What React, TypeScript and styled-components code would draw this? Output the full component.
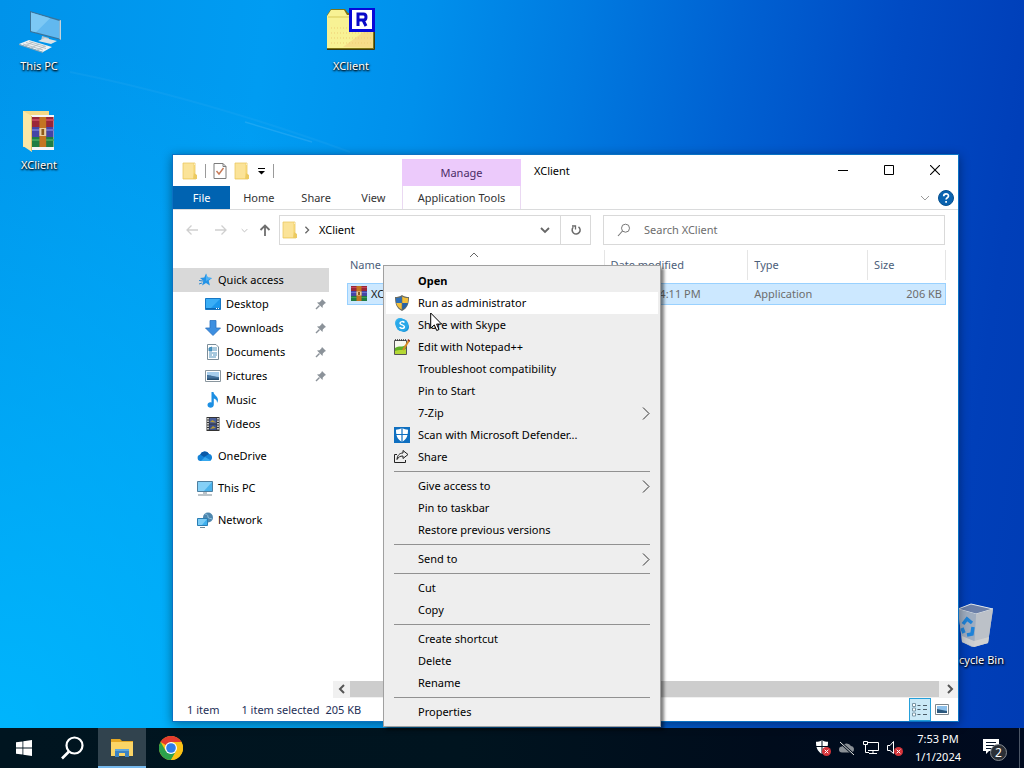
import React from "react";
import styled, { createGlobalStyle, css } from "styled-components";

const GlobalStyle = createGlobalStyle`
  *, *::before, *::after { box-sizing: border-box; }
  html, body { margin: 0; padding: 0; }
  body {
    font-family: "Noto Sans", "Open Sans", sans-serif;
    font-size: 11px;
    line-height: 16px;
    color: #1a1a1a;
  }
  button, input { font: inherit; color: inherit; }
  svg { display: block; flex: none; }
`;

const plainButton = css`
  appearance: none;
  border: 0;
  padding: 0;
  margin: 0;
  background: transparent;
`;

/* ---------- desktop ---------- */

const Screen = styled.div`
  min-height: 100vh;
  display: flex;
  flex-direction: column;
  overflow: hidden;
`;

const Desktop = styled.main`
  position: relative;
  z-index: 1;
  flex: 1;
  background:
    radial-gradient(ellipse 60% 95% at 0% 100%, rgba(0, 186, 255, 0.85), rgba(0, 176, 255, 0) 100%),
    linear-gradient(98deg, #0093ea 0%, #009cf2 24%, #0090ec 38%, #007ae0 52%, #0061d2 66%, #004bc4 80%, #003fb9 92%, #003cb4 100%);
`;

const Streak = styled.svg`
  position: absolute;
  left: 0;
  top: 0;
`;

const Shortcut = styled.button<{ $left: number; $top: number }>`
  ${plainButton}
  position: absolute;
  left: ${(p) => p.$left}px;
  top: ${(p) => p.$top}px;
  width: 76px;
  display: flex;
  flex-direction: column;
  align-items: center;
  gap: 2px;
  color: #fff;
  text-shadow: 0 1px 2px #000, 1px 1px 2px rgba(0, 0, 0, 0.9);
`;

/* ---------- explorer window ---------- */

const Window = styled.section`
  position: absolute;
  left: 172px;
  right: 65px;
  top: 154px;
  bottom: 6px;
  display: flex;
  flex-direction: column;
  background: #fff;
  border: 1px solid #0a72c4;
  box-shadow: 0 2px 10px rgba(0, 0, 0, 0.4);
`;

const Header = styled.header`
  display: flex;
  height: 55px;
  border-bottom: 1px solid #dadbdc;
`;

const HeaderLeft = styled.div`
  display: flex;
  flex-direction: column;
  width: 229px;
`;

const QuickTools = styled.div`
  display: flex;
  align-items: center;
  height: 31px;
  padding-left: 9px;
  gap: 7px;
`;

const ToolDivider = styled.span`
  width: 1px;
  height: 14px;
  background: #9a9a9a;
`;

const IconButton = styled.button`
  ${plainButton}
  display: flex;
  align-items: center;
  justify-content: center;
`;

const Tabs = styled.nav`
  display: flex;
  flex: 1;
`;

const Tab = styled.button<{ $file?: boolean }>`
  ${plainButton}
  flex: 1 1 56px;
  color: ${(p) => (p.$file ? "#fff" : "#333")};
  background: ${(p) => (p.$file ? "#0063b1" : "transparent")};
`;

const ToolGroup = styled.div`
  width: 119px;
  padding-top: 4px;
  display: flex;
  flex-direction: column;
`;

const ToolGroupTitle = styled.div`
  height: 27px;
  line-height: 28px;
  text-align: center;
  color: #4b2c66;
  background: #eccafb;
`;

const ToolGroupTab = styled.button`
  ${plainButton}
  flex: 1;
  color: #333;
  border: solid #ead9f2;
  border-width: 0 1px;
`;

const HeaderRight = styled.div`
  flex: 1;
  display: flex;
  flex-direction: column;
`;

const TitleBar = styled.div`
  display: flex;
  height: 31px;
  padding-left: 13px;
`;

const Title = styled.h1`
  flex: 1;
  margin: 0;
  font-size: 11px;
  font-weight: 400;
  line-height: 32px;
  color: #000;
`;

const CaptionButton = styled(IconButton)`
  width: 46px;
  height: 30px;
`;

const RibbonTools = styled.div`
  flex: 1;
  display: flex;
  align-items: center;
  justify-content: flex-end;
  gap: 8px;
  padding-right: 4px;
`;

const NavBar = styled.div`
  display: grid;
  grid-template-columns: 106px minmax(0, 312fr) minmax(0, 354fr);
  height: 40px;
  padding: 5px 13px 5px 0;
`;

const NavButtons = styled.div`
  display: grid;
  grid-template-columns: 30px 27px 21px 20px;
  padding-left: 4px;
`;

const AddressBar = styled.div`
  display: flex;
  align-items: center;
  border: 1px solid #d9d9d9;
`;

const Crumb = styled.button`
  ${plainButton}
  flex: 1;
  text-align: left;
  color: #000;
`;

const AddressIcons = styled.span`
  display: flex;
  align-items: center;
  gap: 5px;
  padding: 0 8px 0 2px;
`;

const AddressButton = styled(IconButton)<{ $divided?: boolean }>`
  width: 30px;
  height: 28px;
  border-left: ${(p) => (p.$divided ? "1px solid #d9d9d9" : "0")};
`;

const SearchBox = styled.label`
  display: flex;
  align-items: center;
  gap: 13px;
  margin-left: 12px;
  padding-left: 13px;
  border: 1px solid #d9d9d9;
`;

const SearchInput = styled.input`
  flex: 1;
  min-width: 0;
  border: 0;
  padding: 0;
  outline: 0;
  background: transparent;
  &::placeholder { color: #6d6d6d; opacity: 1; }
`;

const Body = styled.div`
  flex: 1;
  min-height: 0;
  display: flex;
`;

const Sidebar = styled.nav`
  width: 160px;
  padding: 18px 4px 0 0;
`;

const Place = styled.button<{ $child?: boolean; $selected?: boolean; $spaced?: boolean }>`
  ${plainButton}
  display: flex;
  align-items: center;
  gap: 5px;
  width: 100%;
  height: 24px;
  margin-top: ${(p) => (p.$spaced ? 8 : 0)}px;
  padding-left: ${(p) => (p.$child ? 32 : 24)}px;
  padding-right: 2px;
  text-align: left;
  color: #000;
  background: ${(p) => (p.$selected ? "#d9d9d9" : "transparent")};
`;

const PlaceName = styled.span`
  flex: 1;
`;

const Pane = styled.div`
  flex: 1;
  min-width: 0;
  display: flex;
  flex-direction: column;
`;

const Listing = styled.div`
  flex: 1;
  padding: 0 12px 0 14px;
`;

const FileTable = styled.table`
  width: 100%;
  table-layout: fixed;
  border-collapse: separate;
  border-spacing: 0;
`;

const Column = styled.th<{ $width: number }>`
  position: relative;
  width: ${(p) => p.$width}%;
  height: 30px;
  padding: 0 0 0 6px;
  font-weight: 400;
  text-align: left;
  color: #4c607a;
  border-right: 1px solid #e5e5e5;
  &:first-child { padding-left: 3px; }
`;

const SortMark = styled.span`
  position: absolute;
  top: 0;
  left: 50%;
  margin-left: -6px;
`;

const SpacerCell = styled.td`
  height: 3px;
  padding: 0;
`;

const FileRow = styled.tr`
  & > td {
    height: 22px;
    padding: 0 0 0 6px;
    color: #6d6d6d;
    background: #cce8ff;
    border: solid #99d1ff;
    border-width: 1px 0;
  }
  & > td:first-child { border-left-width: 1px; padding-left: 3px; color: #1a1a1a; }
  & > td:last-child { border-right-width: 1px; padding-right: 3px; text-align: right; }
`;

const FileName = styled.span`
  display: flex;
  align-items: center;
  gap: 4px;
`;

const ScrollBar = styled.div`
  display: flex;
  height: 17px;
  padding-bottom: 1px;
  background: #f0f0f0;
`;

const ScrollArrow = styled(IconButton)`
  width: 17px;
  height: 16px;
`;

const ScrollThumb = styled.div`
  flex: 1;
  height: 16px;
  margin-right: 2px;
  background: #cdcdcd;
`;

const StatusBar = styled.footer`
  display: flex;
  align-items: center;
  height: 23px;
  padding-left: 14px;
  color: #1e2f57;
`;

const StatusText = styled.span<{ $gap: number }>`
  margin-right: ${(p) => p.$gap}px;
`;

const ViewButtons = styled.div`
  display: flex;
  margin-left: auto;
  padding-right: 5px;
`;

const ViewButton = styled(IconButton)<{ $active?: boolean }>`
  width: 22px;
  height: 23px;
  background: ${(p) => (p.$active ? "#cbe9f7" : "transparent")};
  border: ${(p) => (p.$active ? "1px solid #26a0da" : "0")};
`;

/* ---------- context menu ---------- */

const Menu = styled.div`
  position: absolute;
  left: 383px;
  top: 265px;
  width: 278px;
  padding: 4px 2px 3px;
  background: #eee;
  border: 1px solid #a0a0a0;
  box-shadow: 3px 3px 3px rgba(0, 0, 0, 0.5);
`;

const MenuItem = styled.button<{ $hot?: boolean; $default?: boolean }>`
  ${plainButton}
  display: flex;
  align-items: center;
  gap: 8px;
  width: 100%;
  height: 22px;
  padding: 0 8px;
  text-align: left;
  color: #000;
  font-weight: ${(p) => (p.$default ? 700 : 400)};
  background: ${(p) => (p.$hot ? "#fff" : "transparent")};
`;

const MenuIcon = styled.span`
  width: 16px;
  height: 16px;
`;

const MenuLabel = styled.span`
  flex: 1;
`;

const MenuRule = styled.hr`
  height: 1px;
  margin: 3px 8px;
  border: 0;
  background: #919191;
`;

const Pointer = styled.svg`
  position: absolute;
  left: 430px;
  top: 312px;
`;

/* ---------- taskbar ---------- */

const Taskbar = styled.footer`
  display: flex;
  height: 40px;
  color: #fff;
  background: linear-gradient(90deg, #001520 0%, #00141f 45%, #000c1c 75%, #000a1f 100%);
`;

const Apps = styled.div`
  display: flex;
  gap: 1px;
  flex: 1;
`;

const AppButton = styled(IconButton)<{ $open?: boolean }>`
  width: 48px;
  height: 40px;
  background: ${(p) => (p.$open ? "#31434e" : "transparent")};
  box-shadow: ${(p) => (p.$open ? "inset 0 -2px 0 #76b9ed" : "none")};
`;

const Tray = styled.div`
  display: flex;
  align-items: center;
  gap: 8px;
`;

const Clock = styled.time`
  width: 70px;
  line-height: 18px;
  padding-top: 2px;
  text-align: center;
  white-space: nowrap;
`;

const Notifications = styled(IconButton)`
  width: 47px;
  height: 40px;
  margin-right: 4px;
  padding-right: 2px;
  border-right: 1px solid #4c5666;
`;

/* ---------- icons ---------- */

const FolderSmall = () => (
  <svg width="16" height="18" viewBox="0 0 16 18">
    <path d="M1 1h11v2h1v14H1z" fill="#f8dc82" />
    <path d="M1 1h10v15H1z" fill="#fbe398" />
    <path d="M12 11l3 2v4h-4z" fill="#eccb62" />
    <path d="M1 1h12v11l1 5H1z" fill="none" stroke="#ecc963" strokeWidth=".8" />
  </svg>
);

const PageCheck = () => (
  <svg width="14" height="18" viewBox="0 0 14 18">
    <path d="M1 1.500h9l3 3v12H1z" fill="#fff" stroke="#7c7c7c" />
    <path d="M10 1.500v3h3" fill="none" stroke="#7c7c7c" />
    <path d="M3.500 9l2.500 3 4.500-6" fill="none" stroke="#c77a58" strokeWidth="1.400" />
  </svg>
);

const CaretDown = () => (
  <svg width="9" height="8" viewBox="0 0 9 8">
    <path d="M1 1.500h7" stroke="#000" />
    <path d="M1 4h7L4.500 7.500z" fill="#000" />
  </svg>
);

type ChevronProps = { dir: "up" | "down" | "left" | "right"; size?: number; color?: string; weight?: number };
const chevrons = { up: "M1 7l4-4 4 4", down: "M1 3l4 4 4-4", left: "M7 1L3 5l4 4", right: "M3 1l4 4-4 4" };
const Chevron = ({ dir, size = 10, color = "#666", weight = 1 }: ChevronProps) => (
  <svg width={size} height={size} viewBox="0 0 10 10">
    <path d={chevrons[dir]} fill="none" stroke={color} strokeWidth={weight} />
  </svg>
);

const Arrow = ({ d, color, weight = 1 }: { d: string; color: string; weight?: number }) => (
  <svg width="14" height="14" viewBox="0 0 14 14">
    <path d={d} fill="none" stroke={color} strokeWidth={weight} />
  </svg>
);

const Minimize = () => (
  <svg width="10" height="10" viewBox="0 0 10 10"><path d="M0 5.500h10" stroke="#000" /></svg>
);
const Maximize = () => (
  <svg width="10" height="10" viewBox="0 0 10 10"><path d="M.5.5h9v9h-9z" fill="none" stroke="#000" /></svg>
);
const Close = () => (
  <svg width="10" height="10" viewBox="0 0 10 10"><path d="M0 0l10 10M10 0L0 10" stroke="#000" strokeWidth="1.100" /></svg>
);

const Help = () => (
  <svg width="16" height="16" viewBox="0 0 16 16">
    <circle cx="8" cy="8" r="7.500" fill="#0a63b0" stroke="#07508f" />
    <path d="M5.700 6.300c0-3.100 4.800-3.100 4.800-.3 0 1.800-2.400 1.800-2.400 3.600M8.100 11v1.800" fill="none" stroke="#fff" strokeWidth="1.700" />
  </svg>
);

const Refresh = () => (
  <svg width="12" height="12" viewBox="0 0 12 12">
    <path d="M8.500 2.800A4 4 0 1 1 3.300 3.200" fill="none" stroke="#6a6a6a" strokeWidth="1.500" />
    <path d="M2 2h3.500v3.500" fill="none" stroke="#6a6a6a" strokeWidth="1.300" />
  </svg>
);

const Magnifier = () => (
  <svg width="14" height="14" viewBox="0 0 14 14">
    <circle cx="8.500" cy="5.200" r="4" fill="none" stroke="#777" />
    <path d="M5.500 8L1 13" stroke="#777" strokeWidth="1.100" />
  </svg>
);

const Star = () => (
  <svg width="16" height="16" viewBox="0 0 16 16">
    <path d="M9 1.500l1.700 4.100 4.300.3-3.300 2.900 1.200 4.700L9 11l-3.900 2.500 1.200-4.700L3 5.900l4.300-.3z" fill="#2493e6" />
    <path d="M9 1.500l1.700 4.100 4.300.3L9 9z" fill="#4db2f5" />
    <path d="M2 8.500l4 .5M2 12l3-1" stroke="#2a86cf" />
  </svg>
);

const DesktopIcon = () => (
  <svg width="16" height="16" viewBox="0 0 16 16">
    <path d="M.5 2.500h15v11H.5z" fill="#1c98ec" stroke="#1777c4" />
    <path d="M1 3h14L6 12H1z" fill="#3aaef6" />
    <path d="M1 12.500h14" stroke="#0d69b5" /><path d="M11 12.500h3" stroke="#fff" strokeDasharray="1 1" />
  </svg>
);

const DownloadIcon = () => (
  <svg width="16" height="16" viewBox="0 0 16 16">
    <path d="M5 .5h6V8h4.500L8 15.500.5 8H5z" fill="#3d8fe0" stroke="#2b72c0" strokeWidth=".8" />
  </svg>
);

const DocumentIcon = () => (
  <svg width="16" height="16" viewBox="0 0 16 16">
    <path d="M2.500.5H11l2.500 2.500v12.500h-11z" fill="#fff" stroke="#7b8d99" />
    <path d="M4 4l3-1v4H4zM8 4h4M8 6h4M4 9h8M4 11h3M8 11h4M4 13h7" fill="#4e99c4" stroke="#3c87b4" strokeWidth=".9" />
  </svg>
);

const PictureIcon = () => (
  <svg width="16" height="16" viewBox="0 0 16 16">
    <path d="M.5 2.500h15v11H.5z" fill="#fff" stroke="#8a969e" />
    <path d="M2 4h12v8H2z" fill="#a7cdec" />
    <path d="M2 7c3 0 5 1 12 2v3H2z" fill="#44719b" /><path d="M2 10.500h12V12H2z" fill="#274e70" />
  </svg>
);

const MusicIcon = () => (
  <svg width="16" height="16" viewBox="0 0 16 16">
    <path d="M6.500 0h2c0 3 4.500 4 4.500 8 0 1-.4 2.200-1 3 .3-2.700-1.500-4-3.200-4.400v6C9 16.800 2.500 16.800 2.500 13c0-2.400 2.500-3.300 4-2.400z" fill="#1c8fe3" />
  </svg>
);

const VideoIcon = () => (
  <svg width="16" height="16" viewBox="0 0 16 16">
    <path d="M1.500 1h13v14h-13z" fill="#333" />
    <path d="M4.500 2h7v5.500h-7z" fill="#4a5f9c" /><path d="M4.500 8.500h7V14h-7z" fill="#3b4f8c" />
    <path d="M5 6l2.500-2L11 6.500zM5 13l3-3 3 2z" fill="#b49a33" />
    <path d="M3 2v12M13 2v12" stroke="#fff" strokeWidth="1.400" strokeDasharray="1.500 1" />
  </svg>
);

const CloudIcon = () => (
  <svg width="16" height="16" viewBox="0 0 16 16">
    <path d="M3.500 13a3.300 3.300 0 0 1-.3-6.500A5 5 0 0 1 12 6a3.600 3.600 0 0 1 .5 7z" fill="#1583d7" />
    <path d="M3.200 6.500A5 5 0 0 1 12 6L7 9z" fill="#0b5aa8" />
    <path d="M4 13l4-4 6 3.500-1.500.5z" fill="#36a8ee" />
  </svg>
);

const PcIcon = () => (
  <svg width="16" height="16" viewBox="0 0 16 16">
    <path d="M.5 1.500h15v10H.5z" fill="#4bb3ec" stroke="#4f7f9f" />
    <path d="M1 2h14l-8 9H1z" fill="#85d0f7" />
    <path d="M6 13h4M1 15h14" stroke="#7b8a94" strokeWidth="1.200" />
  </svg>
);

const NetworkIcon = () => (
  <svg width="16" height="16" viewBox="0 0 16 16">
    <circle cx="11" cy="5.500" r="5" fill="#4f87ae" />
    <path d="M8 2c2 0 3 1 3 3s3 1 4 2" fill="none" stroke="#8fc3e2" />
    <path d="M.5 6.500h10v7H.5z" fill="#3fb0ee" stroke="#2a7db3" />
    <path d="M1 7h9l-5 6H1z" fill="#7accf6" /><path d="M3 15.500h5" stroke="#6f8796" />
  </svg>
);

const PinIcon = () => (
  <svg width="12" height="12" viewBox="0 0 12 12">
    <path d="M7 1l4 4-1.200.6-2 2L7.500 10 2 4.600l2.600-.4 1.900-2z" fill="#8b9299" />
    <path d="M4.500 7.500L1 11" stroke="#8b9299" strokeWidth="1.400" />
  </svg>
);

const RarArt = () => (
  <>
    <path d="M0 0h16v5H0z" fill="#9a2638" /><path d="M0 5h16v5H0z" fill="#4545a6" /><path d="M0 10h16v5H0z" fill="#1f7d43" />
    <path d="M0 1.500h16" stroke="#c24659" /><path d="M0 6.500h16" stroke="#6a70cc" /><path d="M0 11.500h16" stroke="#3fa05a" />
    <path d="M5.500 0h5v15h-5z" fill="#c47521" /><path d="M5.500 5.500h5v4h-5z" fill="#e8cfa0" /><path d="M7 6h2v3H7z" fill="#8d5a1c" />
  </>
);

const RarIcon = () => (
  <svg width="16" height="16" viewBox="0 0 16 16"><RarArt /></svg>
);

const DetailsIcon = () => (
  <svg width="16" height="14" viewBox="0 0 16 14">
    <path d="M.5.5h3v3h-3zM.5 5h3v3h-3zM.5 10h3v3h-3z" fill="#fff" stroke="#7a96a6" />
    <path d="M5.500 2.500h3M11 2.500h4M5.500 6.500h3M11 6.500h4M5.500 11.500h3M11 11.500h4" stroke="#4b5c68" />
  </svg>
);

const TilesIcon = () => (
  <svg width="14" height="11" viewBox="0 0 14 11">
    <path d="M.5.5h13v10H.5z" fill="#fff" stroke="#7d868c" />
    <path d="M2 2h10v7H2z" fill="#8dc0ea" /><path d="M2 5l5 1 5 1v2H2z" fill="#2b577d" />
  </svg>
);

const UacShield = () => (
  <svg width="16" height="16" viewBox="0 0 16 16">
    <path d="M8 0c2 1.500 4.500 2 7 2 0 6-1 11-7 14C2 13 1 8 1 2c2.500 0 5-.5 7-2z" fill="#6b6d63" />
    <path d="M7.700 1.500V8H2.300C2 6.500 2 4.500 2 3c2.200 0 4-.5 5.700-1.500z" fill="#2d6fb7" />
    <path d="M8.300 1.500V8h5.400c.3-1.500.3-3.500.3-5-2.200 0-4-.5-5.700-1.500z" fill="#f3bf3a" />
    <path d="M7.700 8v6.600C4.600 13 3 11 2.300 8z" fill="#f3bf3a" />
    <path d="M8.300 8v6.600C11.400 13 13 11 13.700 8z" fill="#2562a8" />
  </svg>
);

const SkypeIcon = () => (
  <svg width="16" height="16" viewBox="0 0 16 16">
    <circle cx="6" cy="6" r="5" fill="#35b3ee" /><circle cx="10" cy="10" r="5" fill="#1a94d8" /><circle cx="8" cy="8" r="6.300" fill="#2aa8e8" />
    <path d="M10.300 5.600C9.700 4.200 6 4.200 6 6.200c0 2 4.400 1.400 4.400 3.600 0 2-4 2.100-4.700.3" fill="none" stroke="#fff" strokeWidth="1.500" />
  </svg>
);

const NotepadIcon = () => (
  <svg width="16" height="16" viewBox="0 0 16 16">
    <path d="M.5 1.500h12v14H.5z" fill="#f7f7ef" stroke="#555" />
    <path d="M1 9c4-3 7 0 11-3v9H1z" fill="#5fae25" /><path d="M1 12c4-2 7 0 11-2v5H1z" fill="#b4d835" />
    <path d="M1 1h11" stroke="#333" strokeWidth="1.500" strokeDasharray="1 1" />
    <path d="M15 1.500L9 11" stroke="#d88a22" strokeWidth="2" /><path d="M13.800.7l2 1.500" stroke="#9a2b17" strokeWidth="1.500" />
  </svg>
);

const DefenderIcon = () => (
  <svg width="16" height="16" viewBox="0 0 16 16">
    <path d="M0 0h16v16H0z" fill="#0f6fc0" />
    <path d="M8 1c2 1.300 4 1.700 6 1.700 0 5-.8 9.300-6 12.300-5.200-3-6-7.300-6-12.300C4 2.700 6 2.300 8 1z" fill="#fff" />
    <path d="M8 1v14M2 7.500h12" stroke="#0f6fc0" strokeWidth="1.200" />
  </svg>
);

const ShareIcon = () => (
  <svg width="16" height="16" viewBox="0 0 16 16">
    <path d="M3 5.500H.5v8h11V11" fill="none" stroke="#222" />
    <path d="M9 1.500l5 4-5 4V7C6 7 4.500 8 3 10.500 3.300 6.500 5.500 4 9 4z" fill="none" stroke="#222" />
  </svg>
);

const PcLarge = () => (
  <svg width="48" height="48" viewBox="0 0 48 48">
    <path d="M15 3l31 9v20L15 24z" fill="#39749b" />
    <path d="M16 4.500l28.500 8.500v17.500L16 23z" fill="#61b8ef" />
    <path d="M16 4.500l19 5.700L21 24.300 16 23z" fill="#7cc8f4" />
    <path d="M46 12v20l-1.500-1V12.500z" fill="#c3d4dd" />
    <path d="M27 28l7 2-1 4-7-1z" fill="#b8c5cc" /><path d="M23 33l7-3 12 3-6 3z" fill="#dae2e6" />
    <path d="M4 36l10-4 23 7-9 5z" fill="#eef2f4" /><path d="M4 36v1l24 8v-1z" fill="#9aa8b0" />
    <path d="M8 36l20 6M11 34.500l20 6M14 33.500l17 5M10 38l8-4M16 40l8-4M22 42l8-4" stroke="#aab6bd" strokeWidth=".8" />
  </svg>
);

const ArchiveFolder = () => (
  <svg width="48" height="48" viewBox="0 0 48 48">
    <path d="M8 4h26v36H8z" fill="#f4d987" />
    <path d="M16 8h23v35H16z" fill="#f5f5f8" />
    <g transform="translate(17 10) scale(1.350 2)"><RarArt /></g>
    <path d="M8 4l9 5v36l-9-6z" fill="#fbe7a6" /><path d="M16.500 9v35" stroke="#dfbf63" />
  </svg>
);

const RamFolder = () => (
  <svg width="48" height="48" viewBox="0 0 48 48">
    <path d="M0 7l4-6h14l3 4h26v37H0z" fill="#7d7416" />
    <path d="M0 8l4-6h13l3 5h26v33H0z" fill="#f8f294" />
    <path d="M1 9h44" stroke="#d8c95b" />
    <path d="M16 39l30-22v23z" fill="#f5cf83" opacity=".65" />
    <path d="M4 20h41M4 25h41M4 30h41M4 35h41" stroke="#efcd75" strokeDasharray="1 2" />
    <path d="M0 41.500h47.500V12" fill="none" stroke="#3b3a10" />
    <path d="M23.500.5h23v22h-23z" fill="#fff" stroke="#0808d8" strokeWidth="3" />
    <path d="M31 18V6h5.500q2.500 0 2.500 3t-2.500 3H32M36 12l3 6" fill="none" stroke="#0808c8" strokeWidth="3" />
  </svg>
);

const RecycleBin = () => (
  <svg width="48" height="48" viewBox="0 0 48 48">
    <path d="M7 7l13-5 22 5-5 34-16 4-10-5z" fill="#a9b4c4" />
    <path d="M7 7l13-5 22 5-17 5z" fill="#6b7fa8" stroke="#dfe5ea" />
    <path d="M25 12l17-5-5 34-14 4z" fill="#bcc1c8" /><path d="M7 7l18 5-2 33-12-5z" fill="#9fadc0" />
    <path d="M11 34l12 5 15-4-1 6-14 4-12-5z" fill="#d5d5d3" opacity=".8" />
    <path d="M12 22l4-5 5 4M22 25l-1 7-5 1M11 26l2 5" fill="none" stroke="#1f83d8" strokeWidth="3.500" />
  </svg>
);

const WindowsLogo = () => (
  <svg width="16" height="16" viewBox="0 0 16 16">
    <path d="M0 2.300L6.500 1.400v6.200H0zM7.300 1.300L16 0v7.600H7.300zM0 8.400h6.500v6.200L0 13.700zM7.300 8.400H16V16l-8.700-1.300z" fill="#fff" />
  </svg>
);

const TaskSearch = () => (
  <svg width="24" height="24" viewBox="0 0 24 24">
    <circle cx="13.500" cy="9.500" r="8" fill="none" stroke="#fff" strokeWidth="2.200" />
    <path d="M8 15.500L1 22.500" stroke="#fff" strokeWidth="2.600" />
  </svg>
);

const ExplorerLogo = () => (
  <svg width="22" height="20" viewBox="0 0 22 20">
    <path d="M0 1h9l2 2h11v15H0z" fill="#e6a823" /><path d="M0 4h22v14H0z" fill="#fbd566" />
    <path d="M4 11h14v8h-4v-4H8v4H4z" fill="#3c83c3" /><path d="M4 11h14v2H4z" fill="#60a7dc" />
  </svg>
);

const ChromeLogo = () => (
  <svg width="24" height="24" viewBox="0 0 24 24">
    <circle cx="12" cy="12" r="12" fill="#fbc116" />
    <path d="M12 12L1.600 6A12 12 0 0 1 22.400 6H12z" fill="#e33b2e" />
    <path d="M1.600 6A12 12 0 0 0 12 24l5.200-9L12 12 6.800 15z" fill="#2ca14c" />
    <path d="M22.400 6A12 12 0 0 1 12 24l5.200-9a6 6 0 0 0-.9-7.500V6z" fill="#fbc116" />
    <circle cx="12" cy="12" r="6" fill="#fff" /><circle cx="12" cy="12" r="4.800" fill="#2f7de9" />
  </svg>
);

const RedCross = () => (
  <>
    <circle cx="11.500" cy="11.500" r="4.500" fill="#d6343a" />
    <path d="M9.700 9.700l3.600 3.600M13.300 9.700l-3.600 3.600" stroke="#fff" />
  </>
);

const TrayShield = () => (
  <svg width="16" height="16" viewBox="0 0 16 16">
    <path d="M7 0c2 1.500 4 1.700 6 1.700C13 7 12 11 7 14 2 11 1 7 1 1.700 3 1.700 5 1.500 7 0z" fill="#fff" />
    <path d="M7 0v14M1 6.500h12" stroke="#000d1c" />
    <RedCross />
  </svg>
);
const TrayCloud = () => (
  <svg width="16" height="16" viewBox="0 0 16 16">
    <path d="M3 12.500a3 3 0 0 1 0-6 5 5 0 0 1 9-.5 3.400 3.400 0 0 1 1 6.500z" fill="#8a9096" />
    <path d="M1 2l14 13" stroke="#000d1c" strokeWidth="2.500" /><path d="M1 2l14 13" stroke="#e8e8e8" />
  </svg>
);
const TrayNetwork = () => (
  <svg width="16" height="16" viewBox="0 0 16 16">
    <path d="M4.500 2.500h11v8H5M10 10.500v3M6 13.500h8" fill="none" stroke="#fff" />
    <path d="M.5 1.500h4v3h-4zM2.500 5v7.500H6" fill="none" stroke="#fff" />
  </svg>
);
const TrayVolume = () => (
  <svg width="16" height="16" viewBox="0 0 16 16">
    <path d="M.5 5.500H3l3.500-4v12L3 10.500H.5z" fill="none" stroke="#fff" />
    <RedCross />
  </svg>
);
const NotificationIcon = () => (
  <svg width="26" height="26" viewBox="0 0 26 26">
    <path d="M1 4h16v12H7l-3 3v-3H1z" fill="#fff" />
    <path d="M4 7.500h10M4 10.500h10M4 13.500h7" stroke="#06152c" />
    <circle cx="16.500" cy="17.500" r="8" fill="#2b2f36" stroke="#858a90" />
    <text x="16.500" y="22" fill="#fff" fontSize="12" textAnchor="middle">2</text>
  </svg>
);

/* ---------- data ---------- */

type PlaceData = { name: string; icon: React.ReactNode; child?: boolean; pinned?: boolean; selected?: boolean; spaced?: boolean };
const places: PlaceData[] = [
  { name: "Quick access", icon: <Star />, selected: true },
  { name: "Desktop", icon: <DesktopIcon />, child: true, pinned: true },
  { name: "Downloads", icon: <DownloadIcon />, child: true, pinned: true },
  { name: "Documents", icon: <DocumentIcon />, child: true, pinned: true },
  { name: "Pictures", icon: <PictureIcon />, child: true, pinned: true },
  { name: "Music", icon: <MusicIcon />, child: true },
  { name: "Videos", icon: <VideoIcon />, child: true },
  { name: "OneDrive", icon: <CloudIcon />, spaced: true },
  { name: "This PC", icon: <PcIcon />, spaced: true },
  { name: "Network", icon: <NetworkIcon />, spaced: true },
];

type Command = { label: string; icon?: React.ReactNode; sub?: boolean; hot?: boolean; bold?: boolean };
const commandGroups: Command[][] = [
  [
    { label: "Open", bold: true },
    { label: "Run as administrator", icon: <UacShield />, hot: true },
    { label: "Share with Skype", icon: <SkypeIcon /> },
    { label: "Edit with Notepad++", icon: <NotepadIcon /> },
    { label: "Troubleshoot compatibility" },
    { label: "Pin to Start" },
    { label: "7-Zip", sub: true },
    { label: "Scan with Microsoft Defender...", icon: <DefenderIcon /> },
    { label: "Share", icon: <ShareIcon /> },
  ],
  [{ label: "Give access to", sub: true }, { label: "Pin to taskbar" }, { label: "Restore previous versions" }],
  [{ label: "Send to", sub: true }],
  [{ label: "Cut" }, { label: "Copy" }],
  [{ label: "Create shortcut" }, { label: "Delete" }, { label: "Rename" }],
  [{ label: "Properties" }],
];

export default function App() {
  return (
    <Screen>
      <GlobalStyle />
      <Desktop>
        <Streak width="400" height="170" viewBox="0 0 400 170" aria-hidden="true">
          <path d="M70 72Q200 98 350 152" fill="none" stroke="#fff" strokeOpacity=".04" strokeWidth="2" />
          <path d="M245 122L312 142" stroke="#fff" strokeOpacity=".1" strokeWidth="1.500" />
        </Streak>
        <Shortcut $left={1} $top={8}><PcLarge />This PC</Shortcut>
        <Shortcut $left={1} $top={107}><ArchiveFolder />XClient</Shortcut>
        <Shortcut $left={313} $top={8}><RamFolder />XClient</Shortcut>
        <Shortcut $left={937} $top={602}><RecycleBin />Recycle Bin</Shortcut>

        <Window>
          <Header>
            <HeaderLeft>
              <QuickTools>
                <FolderSmall />
                <ToolDivider />
                <IconButton aria-label="Properties"><PageCheck /></IconButton>
                <IconButton aria-label="New folder"><FolderSmall /></IconButton>
                <IconButton aria-label="Customize toolbar"><CaretDown /></IconButton>
                <ToolDivider />
              </QuickTools>
              <Tabs>
                <Tab $file>File</Tab>
                <Tab>Home</Tab>
                <Tab>Share</Tab>
                <Tab>View</Tab>
              </Tabs>
            </HeaderLeft>
            <ToolGroup>
              <ToolGroupTitle>Manage</ToolGroupTitle>
              <ToolGroupTab>Application Tools</ToolGroupTab>
            </ToolGroup>
            <HeaderRight>
              <TitleBar>
                <Title>XClient</Title>
                <CaptionButton aria-label="Minimize"><Minimize /></CaptionButton>
                <CaptionButton aria-label="Maximize"><Maximize /></CaptionButton>
                <CaptionButton aria-label="Close"><Close /></CaptionButton>
              </TitleBar>
              <RibbonTools>
                <IconButton aria-label="Expand the ribbon"><Chevron dir="down" color="#9a9a9a" /></IconButton>
                <IconButton aria-label="Help"><Help /></IconButton>
              </RibbonTools>
            </HeaderRight>
          </Header>

          <NavBar>
            <NavButtons>
              <IconButton aria-label="Back"><Arrow color="#cfcfcf" weight={1.3} d="M13 7H2M6.500 2.500L2 7l4.500 4.500" /></IconButton>
              <IconButton aria-label="Forward"><Arrow color="#cfcfcf" weight={1.3} d="M1 7h11M7.500 2.500L12 7l-4.500 4.500" /></IconButton>
              <IconButton aria-label="Recent locations"><Chevron dir="down" size={7} color="#bdbdbd" weight={1.4} /></IconButton>
              <IconButton aria-label="Up"><Arrow color="#6f6f6f" weight={1.8} d="M7 13V2.500M2.500 7L7 2.500 11.500 7" /></IconButton>
            </NavButtons>
            <AddressBar>
              <AddressIcons><FolderSmall /><Chevron dir="right" size={8} weight={1.6} /></AddressIcons>
              <Crumb>XClient</Crumb>
              <AddressButton aria-label="Previous locations"><Chevron dir="down" weight={1.8} /></AddressButton>
              <AddressButton $divided aria-label="Refresh"><Refresh /></AddressButton>
            </AddressBar>
            <SearchBox>
              <Magnifier />
              <SearchInput type="text" placeholder="Search XClient" aria-label="Search XClient" />
            </SearchBox>
          </NavBar>

          <Body>
            <Sidebar>
              {places.map((p) => (
                <Place key={p.name} $child={p.child} $selected={p.selected} $spaced={p.spaced}>
                  {p.icon}
                  <PlaceName>{p.name}</PlaceName>
                  {p.pinned && <PinIcon />}
                </Place>
              ))}
            </Sidebar>
            <Pane>
              <Listing>
                <FileTable>
                  <thead>
                    <tr>
                      <Column $width={43}>Name<SortMark><Chevron dir="up" /></SortMark></Column>
                      <Column $width={24}>Date modified</Column>
                      <Column $width={20}>Type</Column>
                      <Column $width={13}>Size</Column>
                    </tr>
                  </thead>
                  <tbody>
                    <tr aria-hidden="true"><SpacerCell colSpan={4} /></tr>
                    <FileRow>
                      <td><FileName><RarIcon />XClient</FileName></td>
                      <td>1/1/2024 4:11 PM</td>
                      <td>Application</td>
                      <td>206 KB</td>
                    </FileRow>
                  </tbody>
                </FileTable>
              </Listing>
              <ScrollBar>
                <ScrollArrow aria-label="Scroll left"><Chevron dir="left" weight={2} color="#555" /></ScrollArrow>
                <ScrollThumb />
                <ScrollArrow aria-label="Scroll right"><Chevron dir="right" weight={2} color="#555" /></ScrollArrow>
              </ScrollBar>
            </Pane>
          </Body>

          <StatusBar>
            <StatusText $gap={22}>1 item</StatusText>
            <StatusText $gap={6}>1 item selected</StatusText>
            <StatusText $gap={0}>205 KB</StatusText>
            <ViewButtons>
              <ViewButton $active aria-label="Details view"><DetailsIcon /></ViewButton>
              <ViewButton aria-label="Large icons view"><TilesIcon /></ViewButton>
            </ViewButtons>
          </StatusBar>
        </Window>

        <Menu role="menu">
          {commandGroups.map((group, i) => (
            <React.Fragment key={group[0].label}>
              {i > 0 && <MenuRule />}
              {group.map((c) => (
                <MenuItem key={c.label} role="menuitem" $hot={c.hot} $default={c.bold}>
                  <MenuIcon>{c.icon}</MenuIcon>
                  <MenuLabel>{c.label}</MenuLabel>
                  {c.sub && (
                    <svg width="8" height="13" viewBox="0 0 8 13"><path d="M1 .5l6 6-6 6" fill="none" stroke="#333" /></svg>
                  )}
                </MenuItem>
              ))}
            </React.Fragment>
          ))}
        </Menu>

        <Pointer width="13" height="20" viewBox="0 0 13 20" aria-hidden="true">
          <path d="M.7 1v15.300l3.600-3.400 2.400 5.600 2.300-1-2.400-5.400h5z" fill="#fff" stroke="#000" />
        </Pointer>
      </Desktop>

      <Taskbar>
        <Apps>
          <AppButton aria-label="Start"><WindowsLogo /></AppButton>
          <AppButton aria-label="Search"><TaskSearch /></AppButton>
          <AppButton $open aria-label="File Explorer"><ExplorerLogo /></AppButton>
          <AppButton aria-label="Chrome"><ChromeLogo /></AppButton>
        </Apps>
        <Tray>
          <TrayShield />
          <TrayCloud />
          <TrayNetwork />
          <TrayVolume />
        </Tray>
        <Clock>7:53 PM<br />1/1/2024</Clock>
        <Notifications aria-label="2 new notifications"><NotificationIcon /></Notifications>
      </Taskbar>
    </Screen>
  );
}
